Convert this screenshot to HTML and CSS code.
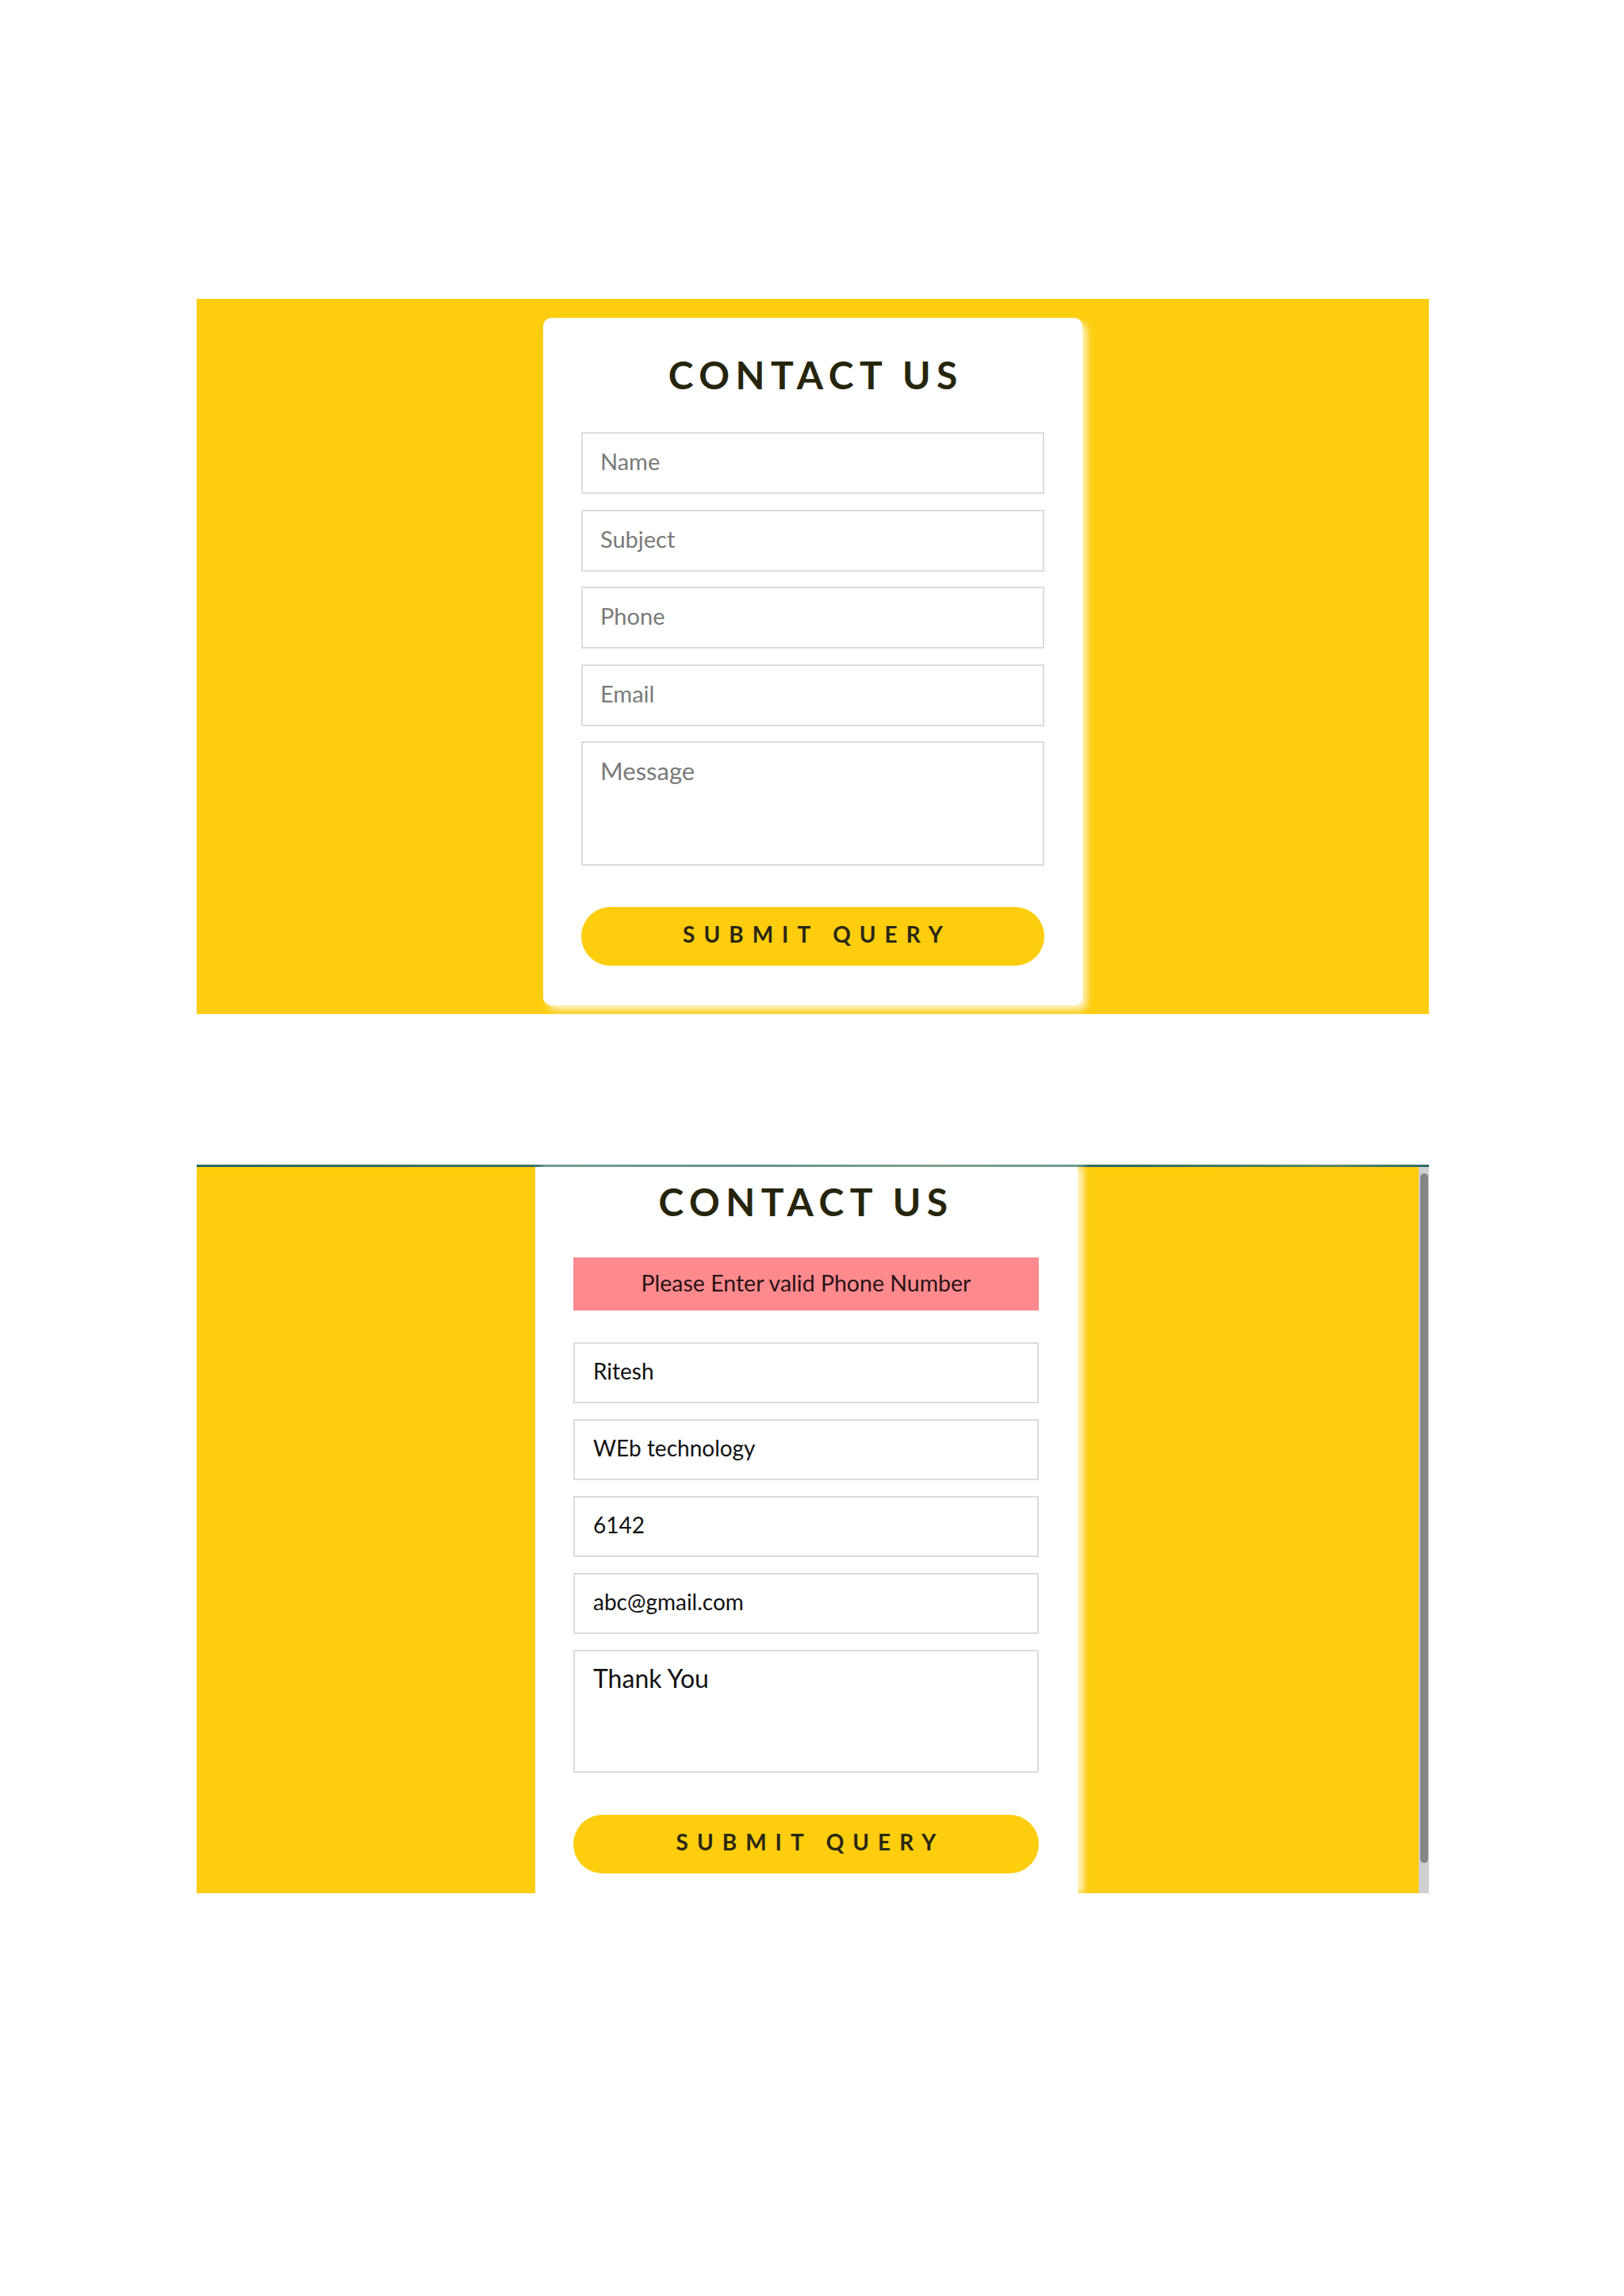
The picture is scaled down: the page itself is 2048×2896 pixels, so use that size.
FILE: index.html
```html
<!DOCTYPE html>
<html>
<head>
<meta charset="utf-8">
<title>Contact Us</title>
<link rel="stylesheet" href="styles.css">
</head>
<body>
<div class="page">
  <section class="band band-one">
    <form class="card card-one">
      <h1 class="title">CONTACT US</h1>
      <input class="field" type="text" placeholder="Name">
      <input class="field" type="text" placeholder="Subject">
      <input class="field" type="text" placeholder="Phone">
      <input class="field" type="text" placeholder="Email">
      <textarea class="field area" placeholder="Message"></textarea>
      <button class="submit" type="button">SUBMIT QUERY</button>
    </form>
  </section>

  <section class="band band-two">
    <div class="viewport">
      <form class="card card-two">
        <h1 class="title title-two">CONTACT US</h1>
        <div class="error">Please Enter valid Phone Number</div>
        <input class="field filled" type="text" value="Ritesh">
        <input class="field filled" type="text" value="WEb technology">
        <input class="field filled" type="text" value="6142">
        <input class="field filled" type="text" value="abc@gmail.com">
        <textarea class="field area filled-area">Thank You</textarea>
        <button class="submit" type="button">SUBMIT QUERY</button>
      </form>
    </div>
    <div class="scrollbar"><div class="thumb"></div></div>
  </section>
</div>
</body>
</html>
```
FILE: styles.css
```css
* { box-sizing: border-box; }

html, body {
  margin: 0;
  padding: 0;
  background: #ffffff;
}

body {
  width: 2048px;
  height: 2896px;
  font-family: Lato, "Open Sans", sans-serif;
  color: #1b1a0c;
}

.page {
  padding-top: 377px;
  padding-left: 248px;
  display: flex;
  flex-direction: column;
  gap: 190px;
}

.band {
  width: 1554px;
  background: #fdcd0e;
}

.band-one {
  height: 902px;
  padding-top: 24px;
  display: flex;
  justify-content: center;
}

.card {
  background: #ffffff;
  display: flex;
  flex-direction: column;
}

.card-one {
  width: 680px;
  height: 867px;
  border-radius: 10px;
  padding: 42px 48px 0 48px;
  box-shadow: 6px 6px 8px rgba(255, 255, 255, 0.75);
}

.title {
  margin: 0 0 42px 0;
  font-size: 48px;
  line-height: 60px;
  font-weight: 700;
  letter-spacing: 7.5px;
  padding-left: 7.5px;
  text-align: center;
  color: #26250c;
}

.field {
  display: block;
  width: 100%;
  height: 78px;
  margin: 0 0 19.5px 0;
  padding: 0 22px 5px 22px;
  border: 2px solid #dcdcdc;
  border-radius: 0;
  background: #ffffff;
  font-family: Lato, "Open Sans", sans-serif;
  font-size: 29px;
  color: #111111;
  outline: none;
}

.field::placeholder {
  color: #7a7a7a;
  opacity: 1;
}

.area {
  height: 157px;
  padding-top: 15px;
  font-size: 31px;
  line-height: 40px;
  resize: none;
  margin-bottom: 52px;
}

.submit {
  display: block;
  width: 100%;
  height: 74px;
  border: none;
  border-radius: 37px;
  background: #fdcd0e;
  font-family: Lato, "Open Sans", sans-serif;
  font-size: 28px;
  font-weight: 700;
  letter-spacing: 11px;
  padding: 0 0 7px 11px;
  color: #2a2714;
}

/* second screenshot */
.band-two {
  height: 919px;
  display: flex;
  border-top: 3px solid #2d6a68;
  border-image: linear-gradient(90deg, #2a6765 0%, #3b7268 30%, #2a6462 45%, #4b7a5a 60%, #2c6a68 75%, #5b8a5e 92%, #2d6a68 100%) 1;
}

.viewport {
  flex: 1;
  display: flex;
  justify-content: center;
  padding-right: 3px;
}

.card-two {
  width: 684px;
  height: 100%;
  padding: 14px 49px 0 48px;
  box-shadow: 7px 0 8px rgba(255, 255, 255, 0.8);
}

.title-two {
  margin-bottom: 40px;
  padding-left: 0;
}

.error {
  height: 67px;
  background: #fe8a8e;
  color: #2a1214;
  font-size: 28.5px;
  line-height: 64px;
  text-align: center;
  margin-bottom: 40px;
}

.filled {
  height: 77px;
  font-size: 28px;
  padding-left: 23px;
  margin-bottom: 20px;
}

.filled-area {
  height: 155px;
  font-size: 32px;
  padding-left: 23px;
  padding-top: 14px;
  margin-bottom: 53px;
}

.scrollbar {
  width: 13px;
  background: #d0d0d0;
  padding: 8px 1px 38px 2px;
}

.thumb {
  height: 100%;
  background: #858585;
  border-radius: 5px;
}
```
